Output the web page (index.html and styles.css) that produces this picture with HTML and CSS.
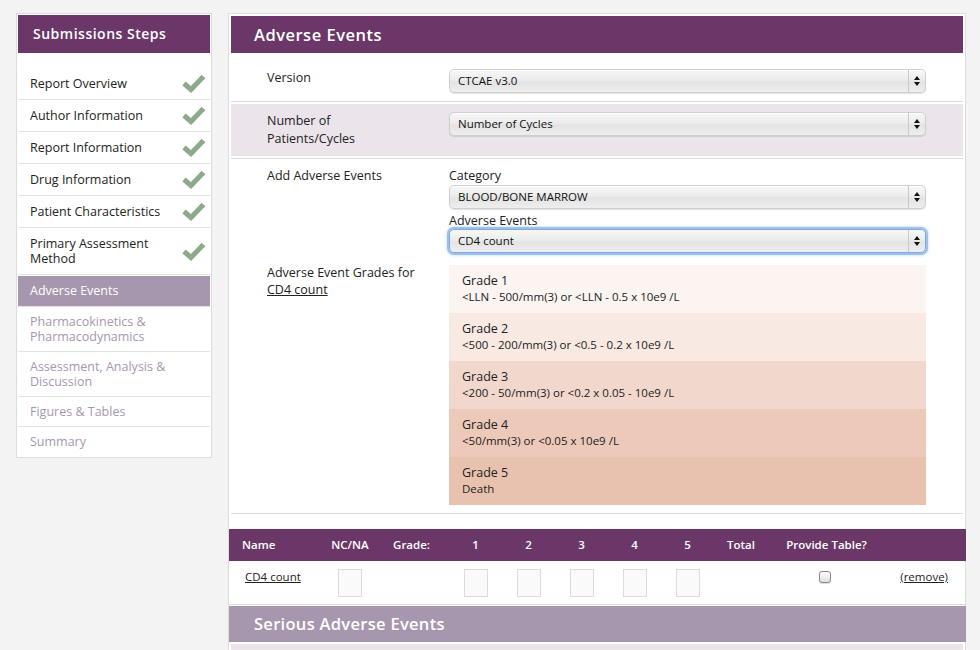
FILE: index.html
```html
<!DOCTYPE html>
<html lang="en">
<head>
<meta charset="utf-8">
<title>Adverse Events</title>
<link rel="stylesheet" href="styles.css">
</head>
<body>
<div class="page">
  <aside class="steps">
    <h2 class="steps-title">Submissions Steps</h2>
    <ul class="step-list">
      <li class="step done"><span>Report Overview</span><svg class="check" viewBox="0 0 24 19"><path d="M2 9.5 L9 15.5 L21.5 2.5"/></svg></li>
      <li class="step done"><span>Author Information</span><svg class="check" viewBox="0 0 24 19"><path d="M2 9.5 L9 15.5 L21.5 2.5"/></svg></li>
      <li class="step done"><span>Report Information</span><svg class="check" viewBox="0 0 24 19"><path d="M2 9.5 L9 15.5 L21.5 2.5"/></svg></li>
      <li class="step done"><span>Drug Information</span><svg class="check" viewBox="0 0 24 19"><path d="M2 9.5 L9 15.5 L21.5 2.5"/></svg></li>
      <li class="step done"><span>Patient Characteristics</span><svg class="check" viewBox="0 0 24 19"><path d="M2 9.5 L9 15.5 L21.5 2.5"/></svg></li>
      <li class="step done tall"><span>Primary Assessment<br>Method</span><svg class="check" viewBox="0 0 24 19"><path d="M2 9.5 L9 15.5 L21.5 2.5"/></svg></li>
      <li class="step active"><span>Adverse Events</span></li>
      <li class="step todo"><span>Pharmacokinetics &amp;<br>Pharmacodynamics</span></li>
      <li class="step todo"><span>Assessment, Analysis &amp;<br>Discussion</span></li>
      <li class="step todo"><span>Figures &amp; Tables</span></li>
      <li class="step todo"><span>Summary</span></li>
    </ul>
  </aside>

  <main class="panel">
    <h1 class="panel-title">Adverse Events</h1>

    <div class="row row-version">
      <div class="label">Version</div>
      <div class="select"><span class="select-text">CTCAE v3.0</span><span class="select-arrows"><i class="up"></i><i class="down"></i></span></div>
    </div>

    <div class="row-wrap">
      <div class="row row-shaded">
        <div class="label">Number of<br>Patients/Cycles</div>
        <div class="select"><span class="select-text">Number of Cycles</span><span class="select-arrows"><i class="up"></i><i class="down"></i></span></div>
      </div>
    </div>

    <div class="row row-add">
      <div class="label add-label">Add Adverse Events</div>
      <div class="stack">
        <div class="field-label">Category</div>
        <div class="select"><span class="select-text">BLOOD/BONE MARROW</span><span class="select-arrows"><i class="up"></i><i class="down"></i></span></div>
        <div class="field-label second">Adverse Events</div>
        <div class="select focused"><span class="select-text">CD4 count</span><span class="select-arrows"><i class="up"></i><i class="down"></i></span></div>
      </div>
      <div class="label grades-label">Adverse Event Grades for<br><a href="#">CD4 count</a></div>
      <div class="grades">
        <div class="grade g1"><div class="grade-title">Grade 1</div><div class="grade-desc">&lt;LLN - 500/mm(3) or &lt;LLN - 0.5 x 10e9 /L</div></div>
        <div class="grade g2"><div class="grade-title">Grade 2</div><div class="grade-desc">&lt;500 - 200/mm(3) or &lt;0.5 - 0.2 x 10e9 /L</div></div>
        <div class="grade g3"><div class="grade-title">Grade 3</div><div class="grade-desc">&lt;200 - 50/mm(3) or &lt;0.2 x 0.05 - 10e9 /L</div></div>
        <div class="grade g4"><div class="grade-title">Grade 4</div><div class="grade-desc">&lt;50/mm(3) or &lt;0.05 x 10e9 /L</div></div>
        <div class="grade g5"><div class="grade-title">Grade 5</div><div class="grade-desc">Death</div></div>
      </div>
    </div>

    <div class="events-table">
      <div class="thead">
        <span class="c-name">Name</span>
        <span class="c-center">NC/NA</span>
        <span class="c-center">Grade:</span>
        <span class="c-center">1</span>
        <span class="c-center">2</span>
        <span class="c-center">3</span>
        <span class="c-center">4</span>
        <span class="c-center">5</span>
        <span class="c-center">Total</span>
        <span class="c-center c-provide">Provide Table?</span>
        <span></span>
      </div>
      <div class="trow">
        <span class="c-name"><a href="#">CD4 count</a></span>
        <span class="c-center"><span class="box"></span></span>
        <span></span>
        <span class="c-center"><span class="box"></span></span>
        <span class="c-center"><span class="box"></span></span>
        <span class="c-center"><span class="box"></span></span>
        <span class="c-center"><span class="box"></span></span>
        <span class="c-center"><span class="box"></span></span>
        <span></span>
        <span class="c-center"><span class="checkbox"></span></span>
        <span class="c-remove"><a href="#">(remove)</a></span>
      </div>
    </div>

    <h2 class="section-title">Serious Adverse Events</h2>
    <div class="section-body"></div>
  </main>
</div>
</body>
</html>
```
FILE: styles.css
```css
* { box-sizing: border-box; }

body {
  margin: 0;
  background: #f3f3f3;
  font-family: "Open Sans", "Liberation Sans", sans-serif;
  color: #222;
}

a { color: #222; text-decoration: underline; }

.page {
  display: flex;
  align-items: flex-start;
  gap: 16px;
  padding: 13px 0 0 16px;
}

/* Sidebar */
.steps {
  width: 196px;
  flex: none;
  background: #fff;
  border: 1px solid #ddd;
  padding: 1px;
}

.steps-title {
  margin: 0;
  height: 38px;
  line-height: 38px;
  padding-left: 15px;
  background: #6a3768;
  color: #fff;
  font-size: 14px;
  font-weight: 600;
  letter-spacing: 0.5px;
}

.step-list {
  list-style: none;
  margin: 15px 0 0;
  padding: 0;
}

.step {
  display: flex;
  align-items: center;
  justify-content: space-between;
  padding: 7px 4px 7px 12px;
  border-bottom: 1px solid #e2e2e2;
  font-size: 12.5px;
  line-height: 15px;
}

.step:last-child { border-bottom: 0; }

.step.done { padding-top: 6px; padding-bottom: 6px; color: #222; }
.step.tall { padding-top: 8px; padding-bottom: 8px; }

.step.active {
  background: #a797ae;
  color: #fff;
  margin-top: 1px;
  padding-bottom: 8px;
}

.step.todo { color: #a796ae; }

.check {
  width: 24px;
  height: 19px;
  flex: none;
}

.check path {
  fill: none;
  stroke: #8fa98b;
  stroke-width: 5;
}

/* Main panel */
.panel {
  width: 738px;
  flex: none;
  background: #fff;
  border: 1px solid #ddd;
}

.panel-title {
  margin: 2px 2px 0;
  height: 37px;
  line-height: 37px;
  padding-left: 23px;
  background: #6a3768;
  color: #fff;
  font-size: 16.5px;
  font-weight: 600;
  letter-spacing: 0.5px;
}

.row {
  display: grid;
  grid-template-columns: 182px 477px;
  padding-left: 36px;
  margin: 0 2px;
  font-size: 12.5px;
}

.label { line-height: 18px; }

.row-version {
  padding-top: 16px;
  padding-bottom: 8px;
  border-bottom: 1px solid #ddd;
}

.row-wrap {
  margin: 0 2px;
  padding: 2px 0;
  border-bottom: 1px solid #ddd;
}

.row-shaded {
  margin: 0;
  background: #ebe4eb;
  padding-top: 8px;
  padding-bottom: 8px;
}

.row-add {
  padding-top: 7px;
  padding-bottom: 8px;
  row-gap: 12px;
  border-bottom: 1px solid #ddd;
}

.add-label { margin-top: 1px; }

.field-label { line-height: 18px; margin-top: 1px; }
.field-label.second { margin-top: 3px; margin-bottom: -1px; }

.grades-label { line-height: 17px; margin-top: -1px; }

/* Select look-alike */
.select {
  display: flex;
  align-items: stretch;
  height: 24px;
  border: 1px solid #cfcfcf;
  border-radius: 5px;
  background: linear-gradient(to bottom, #f7f7f7 0%, #ececec 45%, #e3e3e3 55%, #eeeeee 100%);
  box-shadow: 0 1px 1px rgba(0, 0, 0, 0.12), inset 0 1px 0 #fff;
  font-size: 11.5px;
  color: #111;
}

.select-text {
  flex: 1;
  line-height: 22px;
  padding-left: 8px;
}

.select-arrows {
  width: 17px;
  border-left: 1px solid #c9c9c9;
  display: flex;
  flex-direction: column;
  align-items: center;
  justify-content: center;
  gap: 2px;
}

.select-arrows i {
  width: 0;
  height: 0;
  border-left: 3px solid transparent;
  border-right: 3px solid transparent;
}

.select-arrows .up { border-bottom: 4px solid #111; }
.select-arrows .down { border-top: 4px solid #111; }

.select.focused {
  border: 1px solid #7ea9dc;
  box-shadow: 0 0 0 2px #9cc2ec, 0 0 3px 2px rgba(110, 160, 225, 0.5);
}

/* Grades */
.grades { display: flex; flex-direction: column; }

.grade {
  height: 48px;
  padding: 7px 13px 0;
}

.grade-title { font-size: 12.5px; line-height: 17px; }
.grade-desc { font-size: 11.5px; line-height: 16px; }

.g1 { background: #fbf4f1; }
.g2 { background: #f8e9e3; }
.g3 { background: #f2d8cc; }
.g4 { background: #ecc9b9; }
.g5 { background: #e9c2af; }

/* Table */
.events-table { margin-top: 15px; }

.thead, .trow {
  display: grid;
  grid-template-columns: 97px 48px 75px 53px 53px 53px 53px 53px 54px 114px 84px;
}

.thead {
  height: 32px;
  align-items: center;
  background: #6a3768;
  color: #fff;
  font-size: 11.5px;
  font-weight: 600;
  margin-right: -1px;
  padding-bottom: 2px;
}

.c-provide { padding-left: 3px; }

.trow {
  height: 44px;
  padding-top: 8px;
  border-bottom: 1px solid #ddd;
  font-size: 11.5px;
  line-height: 16px;
  align-items: start;
}

.c-name { padding-left: 13px; }
.trow .c-name { padding-left: 16px; }
.c-center { display: flex; justify-content: center; text-align: center; }
.c-remove { text-align: right; padding-right: 18px; }

.box {
  display: block;
  width: 24px;
  height: 28px;
  border: 1px solid #dcdcdc;
  background: #fafafa;
}

.checkbox {
  display: block;
  width: 12px;
  height: 12px;
  margin-top: 2px;
  border: 1px solid #8a8a8a;
  border-radius: 3px;
  background: linear-gradient(to bottom, #fdfdfd, #dedede);
  box-shadow: 0 1px 1px rgba(0, 0, 0, 0.15);
}

.section-title {
  margin: 1px -1px 0 0;
  height: 36px;
  line-height: 36px;
  padding-left: 25px;
  background: #a797ae;
  color: #fff;
  font-size: 16.5px;
  font-weight: 600;
  letter-spacing: 0.3px;
}

.section-body {
  margin: 2px 2px 0;
  height: 60px;
  background: #ebe4eb;
}
```
